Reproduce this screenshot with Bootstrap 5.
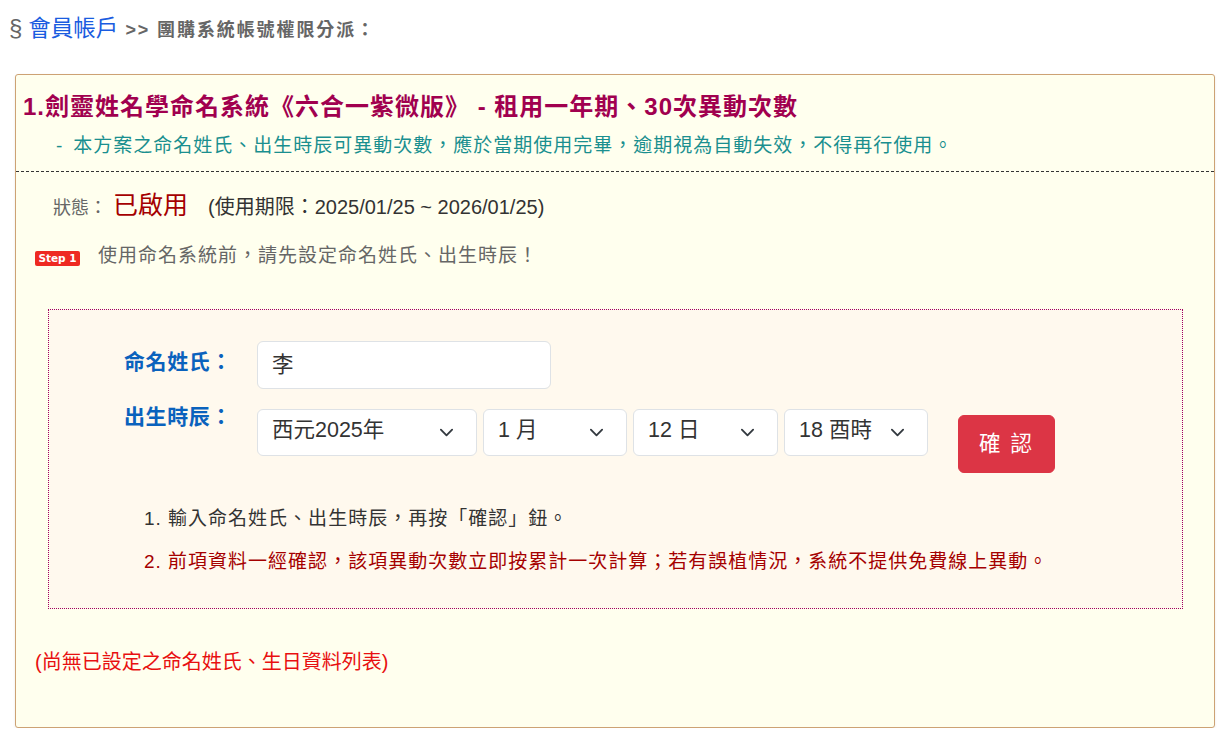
<!DOCTYPE html>
<html lang="zh-Hant">
<head>
<meta charset="utf-8">
<title>團購系統帳號權限分派</title>
<link href="https://cdn.jsdelivr.net/npm/bootstrap@5.3.0/dist/css/bootstrap.min.css" rel="stylesheet">
<style>
body{font-family:"Liberation Sans","Noto Sans CJK TC",sans-serif;color:#333;background:#fff;overflow:hidden}
.crumb-row{height:58px;padding:10px 0 0 9px;color:#666}
.crumb-sec{font-size:24px;line-height:36px;margin-right:6px}
.crumb-link{font-size:22.5px;color:#1a5ce0;text-decoration:none;margin-right:7px}
.crumb-tail{font-size:18px;font-weight:700;letter-spacing:1.9px}
.plan-card{margin:16px 11px 0 15px;height:654px;background:#ffffee;border:1px solid #cda274;border-radius:3px;box-shadow:0 1px 3px rgba(0,0,0,.08)}
.plan-head{height:97px;padding:16px 0 0 7px;border-bottom:1px dashed #333}
.plan-title{font-size:24px;letter-spacing:1px;line-height:32px;font-weight:700;color:#a1004f;margin:0}
.plan-note{font-size:19px;letter-spacing:1px;line-height:26px;color:#1a8f8f;padding:10px 0 0 33px}
.plan-dash{margin-right:10px}
.status-row{padding:13px 0 0 37px;line-height:40px;height:54px;font-size:20px}
.status-lbl{font-size:18px;color:#666}
.status-val{font-size:25px;color:#a50000;margin:0 20px 0 6px}
.step-row{padding:17px 0 0 19px;height:53px;font-size:19px;letter-spacing:1px;color:#666;line-height:26px}
.step-tag{width:45px;height:15px;background:#ee2a22;color:#fff;border-radius:2px;font:700 10.5px/15px "DejaVu Sans",sans-serif;letter-spacing:0;text-align:center;margin:8px 18px 0 0}
.form-box{margin:30px 31px 0 32px;height:300px;background:#fff9ee;border:1px dotted #a1005f;padding:31px 0 0 75px}
.field-lbl{width:133px;font-size:21px;font-weight:700;color:#0a62bd;letter-spacing:.6px;line-height:42px}
.field-tight{line-height:16px}
.name-row{margin-bottom:20px}
.name-input{width:294px;height:48px;font-size:21.5px;padding:2px 12px 8px 14px;color:#333}
.sel-y{width:220px}.sel-m{width:144px}.sel-d{width:145px}.sel-h{width:144px}
.sel-group{gap:6px}
.date-sel{height:47px;font-size:21.5px;padding-left:14px;padding-top:4px;padding-bottom:8px;color:#333;background-position:right 22px center;background-size:15px 15px}
.go-btn{width:97px;height:58px;font-size:21.5px;letter-spacing:2px;margin:6px 0 0 30px}
.tips{padding:24px 0 0 20px;font-size:19px;letter-spacing:1px;line-height:43px}
.tip-red{color:#a50000}
.empty-note{padding:38px 0 0 19px;font-size:20px;color:#e81010}
</style>
</head>
<body>
<div class="crumb-row d-flex align-items-baseline">
  <span class="crumb-sec">§</span>
  <a class="crumb-link" href="#">會員帳戶</a>
  <span class="crumb-tail">&gt;&gt; 團購系統帳號權限分派：</span>
</div>
<div class="card plan-card d-block">
  <div class="plan-head">
    <h2 class="plan-title">1.劍靈姓名學命名系統《六合一紫微版》 - 租用一年期、30次異動次數</h2>
    <div class="plan-note"><span class="plan-dash">-</span>本方案之命名姓氏、出生時辰可異動次數，應於當期使用完畢，逾期視為自動失效，不得再行使用。</div>
  </div>
  <div class="status-row">
    <span class="status-lbl">狀態：</span><span class="status-val">已啟用</span>(使用期限：2025/01/25 ~ 2026/01/25)
  </div>
  <div class="step-row d-flex align-items-start">
    <span class="step-tag">Step 1</span><span>使用命名系統前，請先設定命名姓氏、出生時辰！</span>
  </div>
  <div class="form-box">
    <div class="d-flex name-row">
      <div class="field-lbl">命名姓氏：</div>
      <input class="form-control name-input" type="text" value="李">
    </div>
    <div class="d-flex">
      <div class="field-lbl field-tight">出生時辰：</div>
      <div class="d-flex sel-group flex-shrink-0">
        <select class="form-select date-sel sel-y"><option>西元2025年</option></select>
        <select class="form-select date-sel sel-m"><option>1 月</option></select>
        <select class="form-select date-sel sel-d"><option>12 日</option></select>
        <select class="form-select date-sel sel-h"><option>18 酉時</option></select>
      </div>
      <button class="btn btn-danger go-btn" type="button">確 認</button>
    </div>
    <div class="tips">
      <div>1. 輸入命名姓氏、出生時辰，再按「確認」鈕。</div>
      <div class="tip-red">2. 前項資料一經確認，該項異動次數立即按累計一次計算；若有誤植情況，系統不提供免費線上異動。</div>
    </div>
  </div>
  <div class="empty-note">(尚無已設定之命名姓氏、生日資料列表)</div>
</div>
<script src="https://cdn.jsdelivr.net/npm/bootstrap@5.3.0/dist/js/bootstrap.bundle.min.js"></script>
</body>
</html>
